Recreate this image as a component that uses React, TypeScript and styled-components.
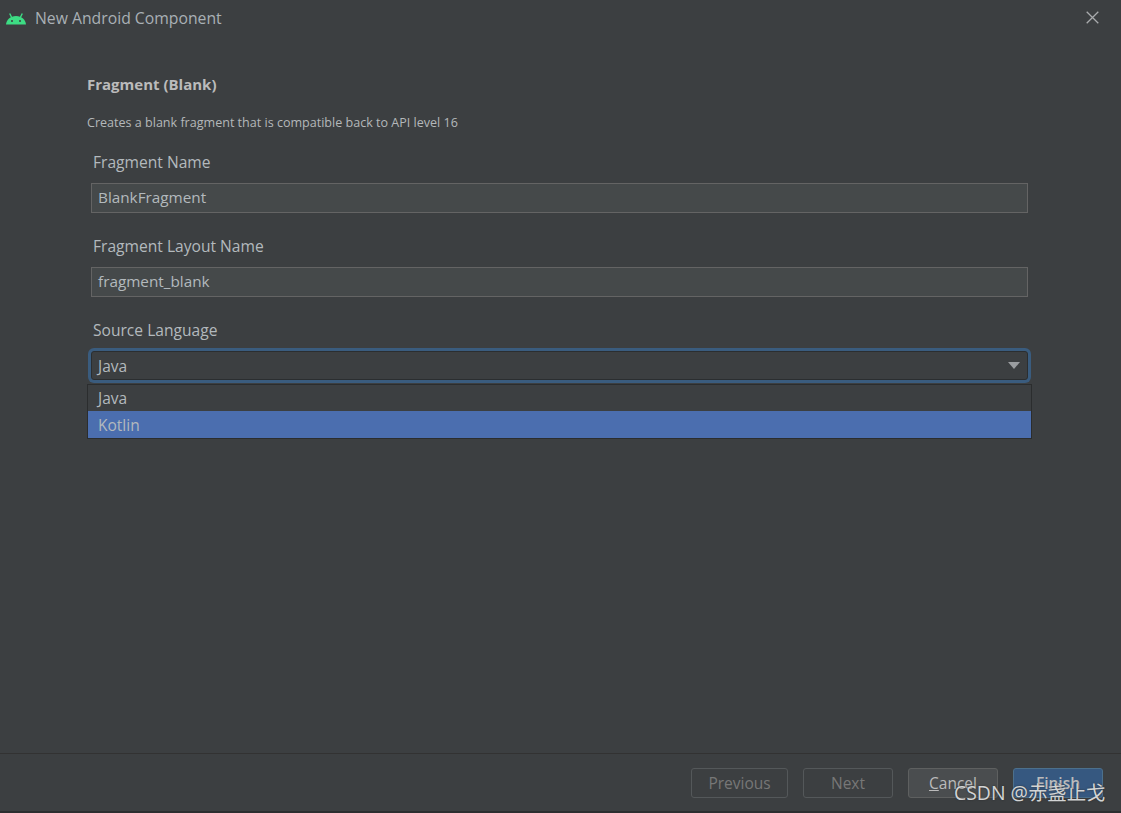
import React, { FC } from 'react';
import styled, { createGlobalStyle } from 'styled-components';

const GlobalStyle = createGlobalStyle`
  html, body {
    margin: 0;
    padding: 0;
    background: #3c3f41;
  }
  * {
    box-sizing: border-box;
  }
`;

const Dialog = styled.div`
  position: relative;
  width: 1121px;
  height: 813px;
  overflow: hidden;
  display: flex;
  flex-direction: column;
  background: #3c3f41;
  color: #bbbbbb;
  font-family: 'Open Sans', 'Noto Sans', sans-serif;
`;

const TitleBar = styled.div`
  height: 35px;
  display: flex;
  align-items: center;
  padding: 0 22px 0 6px;
  flex-shrink: 0;
`;

const Title = styled.div`
  margin-left: 9px;
  font-size: 15.75px;
  color: #a9b0b5;
  flex: 1;
`;

const Content = styled.div`
  flex: 1;
  padding: 39px 93px 0 87px;
  display: flex;
  flex-direction: column;
`;

const Heading = styled.div`
  font-size: 15px;
  line-height: 20px;
  font-weight: 700;
  color: #bbbbbb;
`;

const Description = styled.div`
  margin-top: 21px;
  font-size: 12.56px;
  line-height: 16px;
  color: #b4b8ba;
`;

const Form = styled.div`
  margin-top: 19px;
  padding-left: 4px;
  display: flex;
  flex-direction: column;
`;

const Field = styled.div`
  display: flex;
  flex-direction: column;
  height: 84px;
`;

const Label = styled.div`
  height: 33px;
  margin-left: 2px;
  font-size: 15.6px;
  line-height: 24px;
  color: #b3b9bd;
`;

const Input = styled.div`
  height: 30px;
  padding: 0 6px 2px;
  display: flex;
  align-items: center;
  font-size: 15.3px;
  color: #b3b9bd;
  background: #45494a;
  border: 1px solid #646464;
`;

const ComboWrap = styled.div`
  position: relative;
`;

const Combo = styled.div`
  height: 29px;
  padding: 0 6px;
  display: flex;
  align-items: center;
  justify-content: space-between;
  font-size: 15.5px;
  color: #b3b9bd;
  background: #3c3f41;
  border: 1px solid #2b2e30;
  border-radius: 3px;
  box-shadow: 0 0 0 3px #3a5c7e;
`;

const Arrow = styled.div`
  width: 0;
  height: 0;
  margin-right: 1px;
  border-left: 6px solid transparent;
  border-right: 6px solid transparent;
  border-top: 7px solid #9a9da0;
`;

const Popup = styled.div`
  position: absolute;
  top: 33px;
  left: -4px;
  right: -4px;
  background: #3c3f41;
  border: 1px solid #2b2d2e;
`;

const Option = styled.div<{ $selected?: boolean }>`
  height: ${(p) => (p.$selected ? '27px' : '26px')};
  padding-left: 10px;
  display: flex;
  align-items: center;
  font-size: 15.5px;
  color: #b3b9bd;
  background: ${(p) => (p.$selected ? '#4b6eaf' : 'transparent')};
`;

const Footer = styled.div`
  height: 58px;
  flex-shrink: 0;
  padding: 14px 18px 0 0;
  display: flex;
  justify-content: flex-end;
  gap: 15px;
  border-top: 1px solid #323232;
`;

const Button = styled.div<{ $width: number; $variant?: 'disabled' | 'primary' }>`
  width: ${(p) => p.$width}px;
  height: 30px;
  display: flex;
  align-items: center;
  justify-content: center;
  font-size: 15.5px;
  border-radius: 3px;
  border: 1px solid
    ${(p) =>
      p.$variant === 'disabled' ? '#54585a' : p.$variant === 'primary' ? '#4c708c' : '#5e6060'};
  background: ${(p) =>
    p.$variant === 'disabled' ? 'transparent' : p.$variant === 'primary' ? '#365880' : '#4a4d4f'};
  color: ${(p) => (p.$variant === 'disabled' ? '#777777' : '#bbbbbb')};
  font-weight: ${(p) => (p.$variant === 'primary' ? 600 : 400)};
`;

const Mnemonic = styled.span`
  text-decoration: underline;
`;

const BottomStrip = styled.div`
  height: 2px;
  flex-shrink: 0;
  background: #2c2e30;
`;

const Watermark = styled.div`
  position: absolute;
  left: 954px;
  top: 781px;
  font-family: 'Open Sans', 'Noto Sans CJK SC', sans-serif;
  font-size: 19.4px;
  line-height: 24px;
  white-space: nowrap;
  color: #d2d4d5;
  text-shadow: 0 0 2px #2a2c2d;
`;

const AndroidIcon: FC = () => (
  <svg width="20" height="14" viewBox="0 0 20 14">
    <path d="M0 13.5C.4 8.800 4.200 5 10 5s9.600 3.800 10 8.500z" fill="#3ddc84" />
    <path d="M5.800 6.800L3.700 2.500M14.200 6.800L16.300 2.500" stroke="#3ddc84" strokeWidth="1.400" />
    <circle cx="6" cy="10" r="1" fill="#3c3f41" />
    <circle cx="14" cy="10" r="1" fill="#3c3f41" />
  </svg>
);

const CloseIcon: FC = () => (
  <svg width="13" height="13" viewBox="0 0 13 13">
    <path d="M.7.700L12.300 12.300M12.300.700L.7 12.300" stroke="#a9abad" strokeWidth="1.300" />
  </svg>
);

const App: FC = () => {
  return (
    <>
      <GlobalStyle />
      <Dialog>
        <TitleBar>
          <AndroidIcon />
          <Title>New Android Component</Title>
          <CloseIcon />
        </TitleBar>
        <Content>
          <Heading>Fragment (Blank)</Heading>
          <Description>Creates a blank fragment that is compatible back to API level 16</Description>
          <Form>
            <Field>
              <Label>Fragment Name</Label>
              <Input>BlankFragment</Input>
            </Field>
            <Field>
              <Label>Fragment Layout Name</Label>
              <Input>fragment_blank</Input>
            </Field>
            <Field>
              <Label>Source Language</Label>
              <ComboWrap>
                <Combo>
                  Java
                  <Arrow />
                </Combo>
                <Popup>
                  <Option>Java</Option>
                  <Option $selected>Kotlin</Option>
                </Popup>
              </ComboWrap>
            </Field>
          </Form>
        </Content>
        <Footer>
          <Button $width={97} $variant="disabled">Previous</Button>
          <Button $width={90} $variant="disabled">Next</Button>
          <Button $width={90}>
            <span><Mnemonic>C</Mnemonic>ancel</span>
          </Button>
          <Button $width={90} $variant="primary">Finish</Button>
        </Footer>
        <BottomStrip />
        <Watermark>CSDN @赤盏止戈</Watermark>
      </Dialog>
    </>
  );
};

export default App;
